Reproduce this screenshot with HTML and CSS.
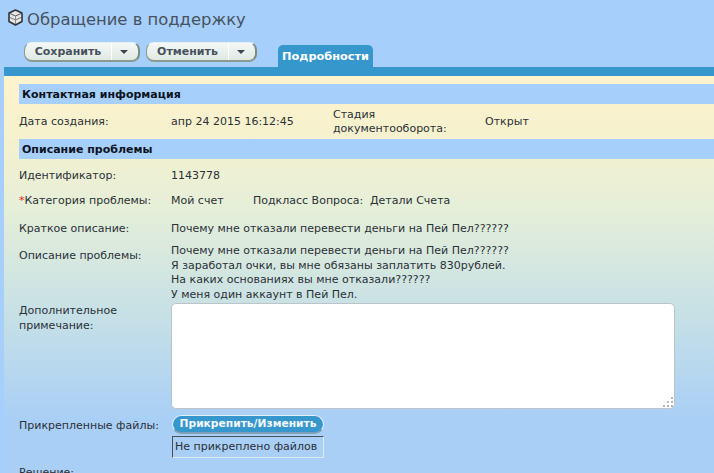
FILE: index.html
```html
<!DOCTYPE html>
<html lang="ru">
<head>
    <meta charset="UTF-8">
    <title>Обращение в поддержку</title>
    <link rel="stylesheet" href="styles.css">
</head>
<body>
    <div class="title">
        <svg class="cube" width="15" height="17" viewBox="0 0 15 17">
            <path d="M7.5 1 L14 4 V12.5 L7.5 16 L1 12.5 V4 Z" fill="#e8e8e8" stroke="#2f3338" stroke-width="1.6" stroke-linejoin="round"/>
            <path d="M2 4.5 L7.5 7 L13 4.5" fill="none" stroke="#555" stroke-width="1"/>
            <path d="M2 8.5 L7.5 11 L13 8.5" fill="none" stroke="#777" stroke-width="1"/>
            <path d="M7.5 7 V15" stroke="#888" stroke-width="1"/>
        </svg>
        <h1>Обращение в поддержку</h1>
    </div>

    <div class="toolbar">
        <div class="btn">
            <span class="btn-text save">Сохранить</span>
            <span class="btn-arrow"></span>
        </div>
        <div class="btn">
            <span class="btn-text cancel">Отменить</span>
            <span class="btn-arrow"></span>
        </div>
        <div class="tab">Подробности</div>
    </div>
    <div class="blue-bar"></div>

    <div class="panel">
        <div class="section">Контактная информация</div>
        <div class="row row-date">
            <div class="label">Дата создания:</div>
            <div class="value date">апр 24 2015 16:12:45</div>
            <div class="stage">Стадия документооборота:</div>
            <div class="value">Открыт</div>
        </div>

        <div class="section">Описание проблемы</div>
        <div class="row row-id">
            <div class="label">Идентификатор:</div>
            <div class="value">1143778</div>
        </div>
        <div class="row row-cat">
            <div class="label"><span class="req">*</span>Категория проблемы:</div>
            <div class="value cat">Мой счет</div>
            <div class="value sub">Подкласс Вопроса:</div>
            <div class="value">Детали Счета</div>
        </div>
        <div class="row row-short">
            <div class="label">Краткое описание:</div>
            <div class="value">Почему мне отказали перевести деньги на Пей Пел??????</div>
        </div>
        <div class="row row-desc">
            <div class="label">Описание проблемы:</div>
            <div class="value">Почему мне отказали перевести деньги на Пей Пел??????<br>Я заработал очки, вы мне обязаны заплатить 830рублей.<br>На каких основаниях вы мне отказали??????<br>У меня один аккаунт в Пей Пел.</div>
        </div>
        <div class="row row-note">
            <div class="label">Дополнительное<br>примечание:</div>
            <div class="note">
                <svg class="grip" width="12" height="12" viewBox="0 0 12 12" fill="#b4b8bc">
                    <rect x="9" y="1" width="2" height="2"/>
                    <rect x="5" y="5" width="2" height="2"/>
                    <rect x="9" y="5" width="2" height="2"/>
                    <rect x="1" y="9" width="2" height="2"/>
                    <rect x="5" y="9" width="2" height="2"/>
                    <rect x="9" y="9" width="2" height="2"/>
                </svg>
            </div>
        </div>
        <div class="row row-files">
            <div class="label">Прикрепленные файлы:</div>
            <div class="files">
                <div class="attach">Прикрепить/Изменить</div>
                <div class="nofiles">Не прикреплено файлов</div>
            </div>
        </div>
        <div class="row row-solution">
            <div class="label">Решение:</div>
        </div>
    </div>
</body>
</html>
```

FILE: styles.css
```css
* {
    box-sizing: border-box;
}

html, body {
    height: 100%;
}

body {
    margin: 0;
    overflow: hidden;
    background-color: #a6cffc;
    font-family: "DejaVu Sans", sans-serif;
    font-size: 11px;
    color: #2b3138;
}

.title {
    display: flex;
    align-items: center;
    height: 36px;
    padding: 3px 0 0 8px;
}

.cube {
    margin-right: 4px;
    margin-top: -4px;
}

h1 {
    margin: 0;
    font-family: "DejaVu Sans", sans-serif;
    font-weight: normal;
    font-size: 16.4px;
    color: #47525e;
}

.toolbar {
    display: flex;
    align-items: flex-start;
    height: 31px;
    padding-left: 24px;
}

.btn {
    display: flex;
    height: 20px;
    margin: 6px 6px 0 0;
    background: linear-gradient(#f4f8f6, #dfe9e3);
    border-radius: 8px;
    border-left: 1px solid #8d9a90;
    border-right: 2px solid #7d8a80;
    border-bottom: 2px solid #8d9a90;
    border-top: 1px solid #e8f2f4;
    font-weight: bold;
    font-size: 11px;
    color: #47525e;
}

.btn-text {
    display: block;
    line-height: 17px;
    text-align: center;
    border-right: 1px solid #fff;
}

.save {
    width: 87px;
}

.cancel {
    width: 82px;
}

.btn-arrow {
    display: block;
    position: relative;
    width: 26px;
}

/* little triangle in the button */
.btn-arrow::after {
    content: "";
    position: absolute;
    left: 8px;
    top: 7px;
    border-left: 4px solid transparent;
    border-right: 4px solid transparent;
    border-top: 4px solid #3c4650;
}

.tab {
    width: 95px;
    height: 22px;
    margin: 9px 0 0 15px;
    background-color: #3597cc;
    border-radius: 5px 5px 0 0;
    color: #fff;
    font-weight: bold;
    font-size: 11.3px;
    line-height: 24px;
    text-align: center;
    white-space: nowrap;
}

.blue-bar {
    height: 9px;
    margin-left: 4px;
    background-color: #3597cc;
}

.panel {
    height: 397px;
    margin-left: 4px;
    padding: 8px 0 0 15px;
    background: linear-gradient(#fff3cd 0, #f6f1ce 60px, #e6efd8 130px, #c6e0e6 240px, #a9cff6 345px);
    overflow: hidden;
}

.section {
    height: 20px;
    padding-left: 3px;
    background-color: #a6cffc;
    color: #0b1420;
    font-weight: bold;
    font-size: 11px;
    line-height: 21px;
}

.row {
    display: flex;
    font-size: 11px;
    line-height: 15px;
}

.label {
    flex: none;
    width: 152px;
    white-space: nowrap;
}

.req {
    color: #e02020;
}

.row-date {
    height: 35px;
    align-items: center;
}

.date {
    width: 162px;
}

.stage {
    width: 152px;
    line-height: 14px;
}

.row-id {
    height: 29px;
    padding-top: 9px;
}

.row-cat {
    height: 29px;
    padding-top: 5px;
}

.value {
    white-space: nowrap;
}

.cat {
    width: 82px;
}

.sub {
    width: 117px;
}

.row-short {
    height: 25px;
    padding-top: 4px;
}

.row-desc {
    height: 61px;
    padding-top: 2px;
}

.row-desc .label {
    padding-top: 4px;
}

.row-desc .value {
    line-height: 14.5px;
}

.row-note {
    height: 112px;
}

.note {
    position: relative;
    width: 504px;
    height: 106px;
    background-color: #fff;
    border: 1px solid #bcc4ca;
    border-radius: 5px;
}

.grip {
    position: absolute;
    right: 0;
    bottom: 0;
}

.row-files {
    height: 50px;
}

.row-files .label {
    padding-top: 3px;
}

.files {
    display: flex;
    flex-direction: column;
    align-items: flex-start;
    margin-left: 1px;
}

.attach {
    width: 152px;
    height: 19px;
    background-color: #3597cc;
    border: 1px solid #e4f0f6;
    border-bottom: 2px solid #7f9fb4;
    border-radius: 10px;
    color: #f2f8fb;
    font-weight: bold;
    font-size: 10.7px;
    line-height: 16px;
    text-align: center;
}

.nofiles {
    margin-top: 2px;
    width: 152px;
    height: 22px;
    padding: 0 2px;
    border: 1px solid #4a5058;
    border-right-color: #dfe8ee;
    border-bottom-color: #dfe8ee;
    line-height: 20px;
    white-space: nowrap;
}
```
